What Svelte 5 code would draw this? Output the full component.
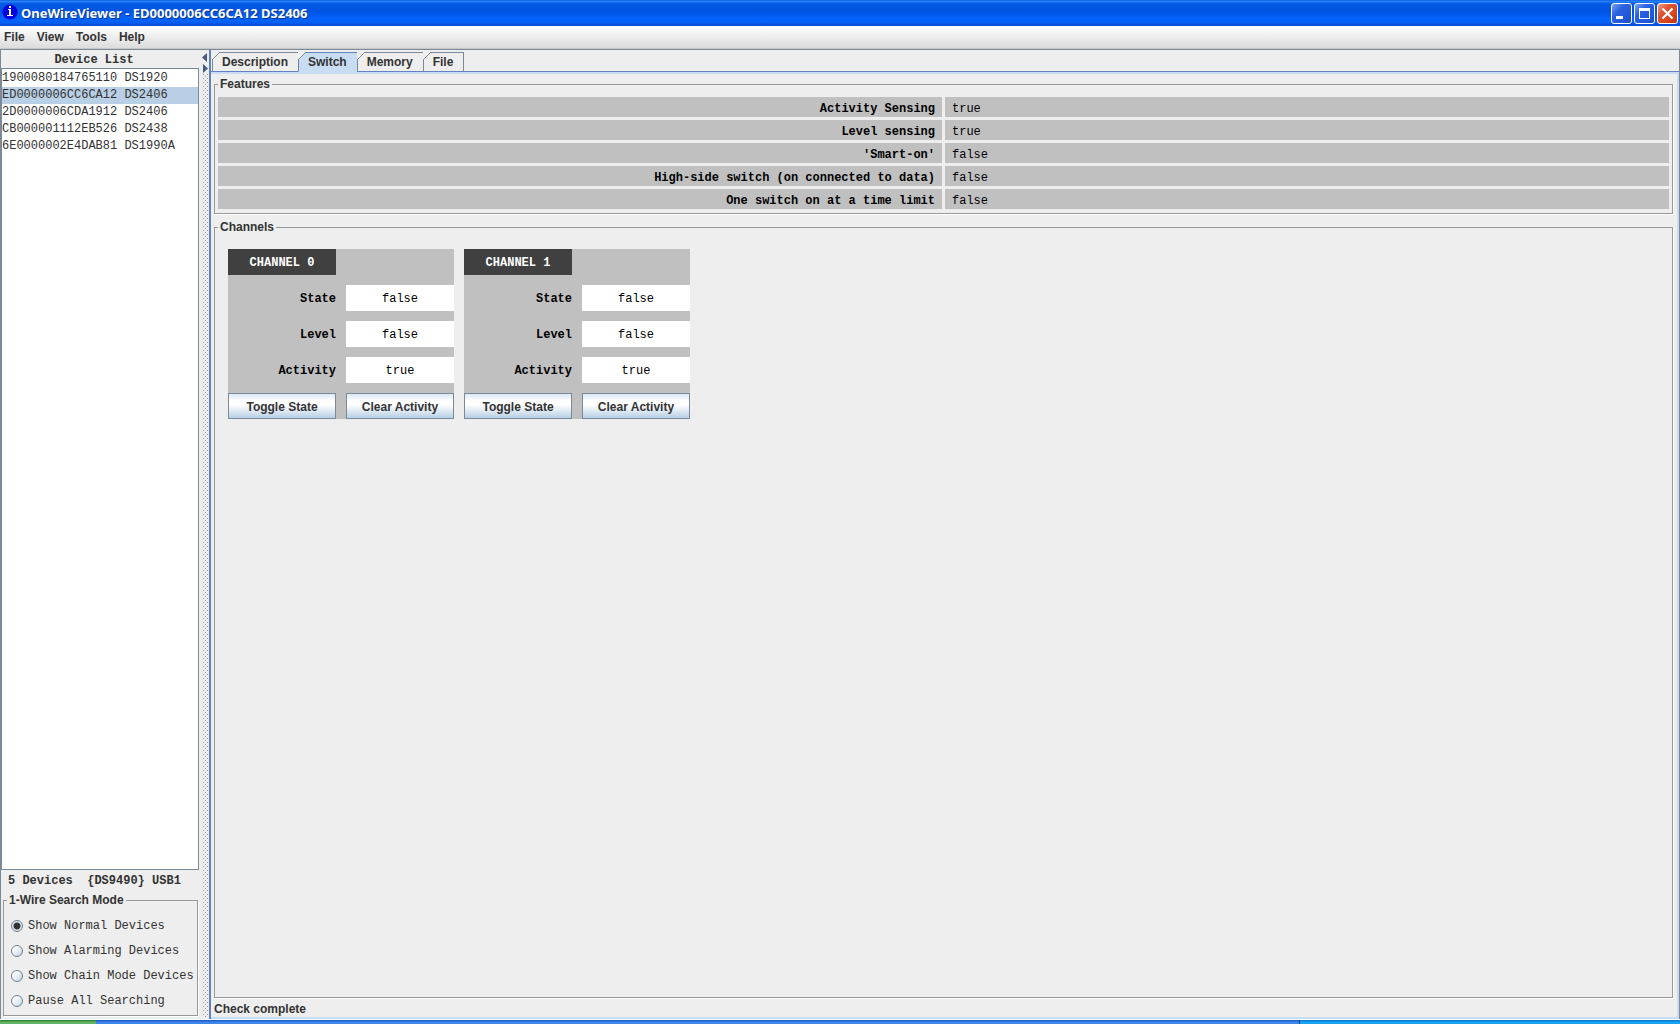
<script>
	const menus = ['File', 'View', 'Tools', 'Help'];
	const devices = [
		'1900080184765110 DS1920',
		'ED0000006CC6CA12 DS2406',
		'2D0000006CDA1912 DS2406',
		'CB000001112EB526 DS2438',
		'6E0000002E4DAB81 DS1990A'
	];
	const searchModes = [
		'Show Normal Devices',
		'Show Alarming Devices',
		'Show Chain Mode Devices',
		'Pause All Searching'
	];
	const tabs = ['Description', 'Switch', 'Memory', 'File'];
	const features = [
		{ label: 'Activity Sensing', value: true },
		{ label: 'Level sensing', value: true },
		{ label: "'Smart-on'", value: false },
		{ label: 'High-side switch (on connected to data)', value: false },
		{ label: 'One switch on at a time limit', value: false }
	];

	let selectedDevice = $state(devices[1]);
	let searchMode = $state(searchModes[0]);
	let activeTab = $state('Switch');
	let channels = $state([
		{ state: false, level: false, activity: true },
		{ state: false, level: false, activity: true }
	]);
</script>

<div class="desktop">
	<header class="titlebar">
		<svg class="titlebar__icon" viewBox="0 0 16 16" aria-hidden="true">
			<circle cx="8" cy="8" r="7.5" fill="#0000e0" />
			<path d="M7 2h2v2H7zM6 5h3v6h2v1H5v-1h2V6H6z" fill="#fff" />
		</svg>
		<h1 class="titlebar__title">OneWireViewer - {selectedDevice}</h1>
		<button type="button" class="winbtn" aria-label="Minimize">
			<svg viewBox="0 0 19 19" aria-hidden="true"><path d="M4 12h7v3H4z" fill="#fff" /></svg>
		</button>
		<button type="button" class="winbtn" aria-label="Maximize">
			<svg viewBox="0 0 19 19" aria-hidden="true">
				<path d="M4 4h11v11H4zM5 7v7h9V7z" fill="#fff" fill-rule="evenodd" />
			</svg>
		</button>
		<button type="button" class="winbtn winbtn--close" aria-label="Close">
			<svg viewBox="0 0 19 19" aria-hidden="true">
				<path d="M4.500 4.500l10 10M14.500 4.500l-10 10" stroke="#fff" stroke-width="2.2" fill="none" />
			</svg>
		</button>
	</header>

	<nav class="menubar">
		{#each menus as menu}
			<button type="button" class="menubar__item">{menu}</button>
		{/each}
	</nav>

	<main class="split">
		<aside class="sidebar">
			<h2 class="sidebar__title">Device List</h2>
			<ul class="devices">
				{#each devices as device}
					<li>
						<button
							type="button"
							class="device"
							class:device--selected={device === selectedDevice}
							onclick={() => (selectedDevice = device)}>{device}</button
						>
					</li>
				{/each}
			</ul>
			<p class="sidebar__count">{devices.length} Devices&nbsp; {'{DS9490}'} USB1</p>
			<fieldset class="group modes">
				<legend>1-Wire Search Mode</legend>
				{#each searchModes as mode}
					<label class="mode">
						<input type="radio" name="mode" value={mode} bind:group={searchMode} />
						{mode}
					</label>
				{/each}
			</fieldset>
		</aside>

		<div class="divider">
			<svg class="divider__arrows" viewBox="0 0 6 22" aria-hidden="true">
				<path d="M5 1v9L0 5.500zM1 12v9l5-4.500z" fill="#4a5a80" />
			</svg>
			<svg class="divider__grip" aria-hidden="true">
				<pattern id="grip" width="4" height="4" patternUnits="userSpaceOnUse">
					<path d="M0 0h1v1H0zM2 2h1v1H2z" fill="#8a93a0" />
				</pattern>
				<rect width="100%" height="100%" fill="url(#grip)" />
			</svg>
		</div>

		<section class="viewer">
			<div class="tabs" role="tablist">
				{#each tabs as tab}
					<button
						type="button"
						role="tab"
						class="tab"
						class:tab--active={tab === activeTab}
						aria-selected={tab === activeTab}
						onclick={() => (activeTab = tab)}>{tab}</button
					>
				{/each}
			</div>

			<div class="panel" role="tabpanel">
				<fieldset class="group features">
					<legend>Features</legend>
					<table>
						<tbody>
							{#each features as feature}
								<tr>
									<th scope="row">{feature.label}</th>
									<td>{feature.value}</td>
								</tr>
							{/each}
						</tbody>
					</table>
				</fieldset>

				<fieldset class="group channels">
					<legend>Channels</legend>
					<div class="channels__row">
						{#each channels as channel, i}
							<div class="channel">
								<h3 class="channel__name">CHANNEL {i}</h3>
								<label for="state-{i}">State</label>
								<output id="state-{i}">{channel.state}</output>
								<label for="level-{i}">Level</label>
								<output id="level-{i}">{channel.level}</output>
								<label for="activity-{i}">Activity</label>
								<output id="activity-{i}">{channel.activity}</output>
								<button type="button" onclick={() => (channel.state = !channel.state)}>Toggle State</button>
								<button type="button" onclick={() => (channel.activity = false)}>Clear Activity</button>
							</div>
						{/each}
					</div>
				</fieldset>

				<p class="status">Check complete</p>
			</div>
		</section>
	</main>

	<footer class="taskbar">
		<div class="taskbar__start"></div>
		<div class="taskbar__tray"></div>
	</footer>
</div>

<style>
	:global(body) {
		margin: 0;
	}

	.desktop {
		--sans: 'Liberation Sans', Arial, sans-serif;
		--mono: 'Liberation Mono', 'Courier New', monospace;
		display: flex;
		flex-direction: column;
		min-height: 100vh;
		background: #eee;
		color: #333;
		font: bold 12px/14px var(--sans);
	}

	.desktop * {
		box-sizing: border-box;
	}

	button {
		margin: 0;
		padding: 0;
		border: 0;
		background: none;
		color: inherit;
		font: inherit;
	}

	/* Title bar */
	.titlebar {
		display: flex;
		align-items: center;
		gap: 2px;
		height: 26px;
		padding: 0 2px;
		background: linear-gradient(#0a5ce0, #2a84f8 5%, #0559e4 14%, #0054e3 45%, #0262fb 72%, #0560f6 86%, #0046d0);
	}

	.titlebar__icon {
		width: 16px;
		height: 16px;
		margin-bottom: 2px;
	}

	.titlebar__title {
		flex: 1;
		margin: 0;
		padding-left: 1px;
		color: #fff;
		font: bold 13px/18px 'Trebuchet MS', 'Noto Sans', sans-serif;
		text-shadow: 1px 1px #0a3590;
	}

	.winbtn {
		width: 21px;
		height: 21px;
		border: 1px solid #fff;
		border-radius: 3px;
		background: linear-gradient(135deg, #7ba3f5, #2b62e0 35%, #2259dc 70%, #1c4cc4);
	}

	.winbtn--close {
		background: linear-gradient(135deg, #f0a18c, #dd5230 35%, #d8431c 70%, #b53412);
	}

	.winbtn svg {
		display: block;
		width: 19px;
		height: 19px;
	}

	/* Menu bar */
	.menubar {
		display: flex;
		gap: 12px;
		height: 23px;
		padding: 0 4px;
		border-bottom: 1px solid #c8c8c8;
		background: linear-gradient(#fff, #dcdcdc);
	}

	.menubar__item {
		padding-bottom: 1px;
	}

	/* Split pane */
	.split {
		flex: 1;
		display: flex;
		border-top: 1px solid #7a8a99;
	}

	.sidebar {
		display: flex;
		flex-direction: column;
		width: 201px;
		padding-right: 2px;
		border-left: 1px solid #7a8a99;
		font-family: var(--mono);
	}

	.sidebar__title {
		margin: 0;
		padding: 2px 12px 0 0;
		font: inherit;
		line-height: 16px;
		text-align: center;
	}

	.devices {
		flex: 1;
		margin: 0;
		padding: 1px 0 0;
		border: 1px solid #7a8a99;
		background: #fff;
		list-style: none;
	}

	.device {
		display: block;
		width: 100%;
		font-weight: normal;
		line-height: 17px;
		text-align: left;
		white-space: nowrap;
	}

	.device--selected {
		background: #b8cfe5;
	}

	.sidebar__count {
		margin: 0;
		padding: 0 7px;
		line-height: 22px;
	}

	.group {
		min-width: 0;
		margin: 0;
		padding: 0;
		border: 1px solid #999;
		box-shadow: 1px 1px #fff;
	}

	.group legend {
		margin-left: 3px;
		padding: 0 2px;
		font-family: var(--sans);
	}

	.modes {
		margin: 1px 1px 3px 2px;
		padding: 6px 0 2px;
	}

	.mode {
		display: flex;
		align-items: center;
		gap: 5px;
		height: 25px;
		padding-left: 7px;
		font-weight: normal;
		white-space: nowrap;
	}

	.mode input {
		appearance: none;
		flex-shrink: 0;
		width: 12px;
		height: 12px;
		margin: 0;
		border: 1px solid #6f7d8c;
		border-radius: 50%;
		background: linear-gradient(135deg, #fff 20%, #c2d6ea);
	}

	.mode input:checked {
		background: radial-gradient(circle, #333 3px, #e2ebf4 4px);
	}

	.divider {
		display: flex;
		flex-direction: column;
		width: 8px;
		padding: 2px 0 2px 1px;
	}

	.divider__arrows {
		width: 6px;
		height: 22px;
	}

	.divider__grip {
		flex: 1;
		width: 6px;
		margin-left: 1px;
	}

	/* Tabs */
	.viewer {
		flex: 1;
		display: flex;
		flex-direction: column;
		min-width: 0;
		border-left: 2px solid #6382bf;
		border-right: 1px solid #7a8a99;
	}

	.tabs {
		display: flex;
		height: 22px;
		padding: 2px 1px 0;
		border-bottom: 1px solid #6382bf;
	}

	.tab {
		position: relative;
		height: 20px;
		margin-right: -1px;
		padding: 0 10px 0 9px;
		border: 1px solid #7a8a99;
		border-bottom-color: #6382bf;
	}

	.tab::before {
		content: '';
		position: absolute;
		top: -1px;
		left: -1px;
		width: 8px;
		height: 8px;
		background: linear-gradient(135deg, #eee 44%, #7a8a99 44%, #7a8a99 54%, transparent 54%);
	}

	.tab--active {
		border-color: #6382bf;
		border-bottom-color: #c8ddf2;
		background: #c8ddf2;
	}

	.panel {
		flex: 1;
		display: flex;
		flex-direction: column;
		padding: 3px 4px 0 3px;
		border: 2px solid #c8ddf2;
		border-left: 0;
	}

	.features {
		padding-bottom: 1px;
	}

	.features table {
		width: 100%;
		margin-top: 3px;
		border-spacing: 3px;
		table-layout: fixed;
		color: #000;
		font-family: var(--mono);
	}

	.features th,
	.features td {
		height: 20px;
		padding: 3px 7px 0;
		background: #c0c0c0;
		font-weight: bold;
		text-align: right;
	}

	.features td {
		font-weight: normal;
		text-align: left;
	}

	.channels {
		flex: 1;
		margin-top: 6px;
	}

	.channels__row {
		display: flex;
		flex-wrap: wrap;
		gap: 10px;
		padding: 15px 13px;
	}

	.channel {
		display: grid;
		grid-template-columns: 108px 108px;
		grid-auto-rows: 26px;
		gap: 10px;
		background: #c0c0c0;
		color: #000;
		font: bold 12px/28px var(--mono);
	}

	.channel__name {
		grid-column: 1;
		margin: 0;
		background: #404040;
		color: #fff;
		font: inherit;
		text-align: center;
	}

	.channel label {
		grid-column: 1;
		text-align: right;
	}

	.channel output {
		background: #fff;
		font-weight: normal;
		text-align: center;
	}

	.channel button {
		padding-top: 1px;
		border: 1px solid #7a8a99;
		background: linear-gradient(#dde8f3, #fff 30%, #fff 45%, #b8cfe5);
		color: #333;
		font: bold 12px/14px var(--sans);
	}

	.status {
		margin: 0;
		padding: 4px 0 1px;
		line-height: 14px;
	}

	/* Top edge of the desktop taskbar */
	.taskbar {
		display: flex;
		justify-content: space-between;
		height: 5px;
		border-top: 1px solid #fff;
		background: linear-gradient(#1c56c0, #3f86ea 60%);
	}

	.taskbar__start {
		width: 96px;
		background: linear-gradient(#2d7a2d, #62b562 60%);
	}

	.taskbar__tray {
		width: 381px;
		border-left: 1px solid #0a3a80;
		background: linear-gradient(#0c72c8, #18a4f4 60%);
	}
</style>
